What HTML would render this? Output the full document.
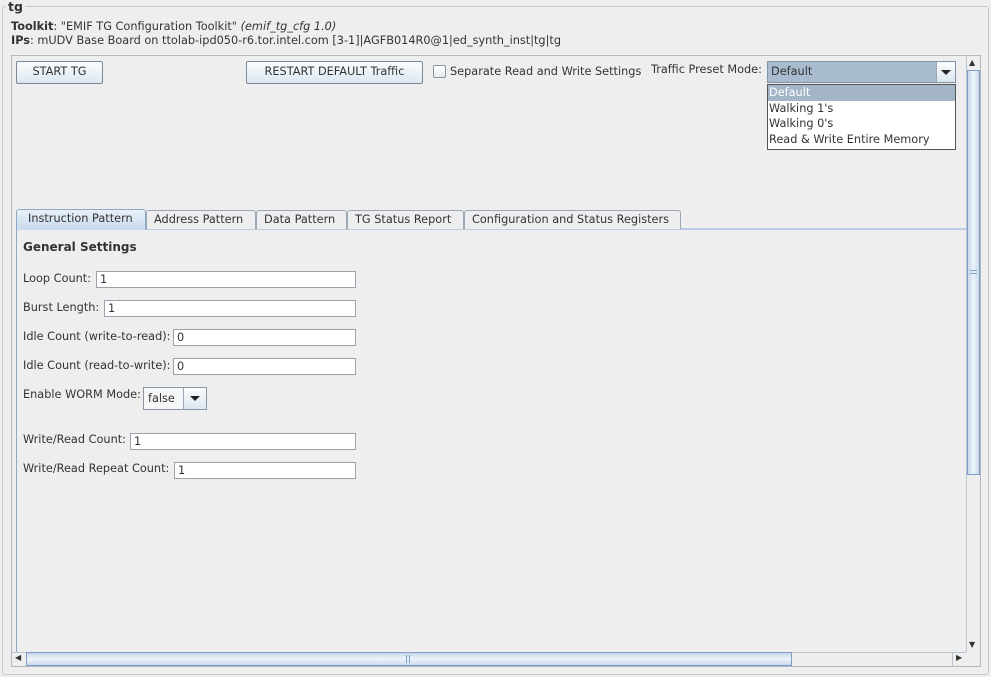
<!DOCTYPE html>
<html><head><meta charset="utf-8"><style>
*{box-sizing:border-box;margin:0;padding:0}
body{width:991px;height:677px;background:#eeeeee;font-family:"DejaVu Sans","Liberation Sans",sans-serif;font-size:11.3px;color:#333;position:relative;overflow:hidden}
.a{position:absolute;white-space:nowrap}
.btn{position:absolute;border:1px solid #7a8a99;border-radius:2px;background:linear-gradient(#fbfcfd,#dce6f0);text-align:center;line-height:20px;color:#333}
.tf{position:absolute;height:17px;background:#fff;border:1px solid #9aa3ad;line-height:15px;padding-left:3px}
.tab{position:absolute;top:210px;height:19px;border:1px solid #9aa8b8;border-bottom:none;border-radius:3px 3px 0 0;line-height:17px;padding:0 7px;background:#eeeeee}
</style></head><body>
<div class="a" style="left:2px;top:6px;width:987px;height:669px;border:1px solid #c8c8c8;border-radius:3px"></div>
<div class="a" style="left:6px;top:-1px;background:#eee;padding:0 2px;font-weight:bold;font-size:12.5px">tg</div>
<div class="a" style="left:11px;top:20px"><b>Toolkit</b>: "EMIF TG Configuration Toolkit" <i>(emif_tg_cfg 1.0)</i></div>
<div class="a" style="left:11px;top:34px"><b>IPs</b>: mUDV Base Board on ttolab-ipd050-r6.tor.intel.com [3-1]|AGFB014R0@1|ed_synth_inst|tg|tg</div>
<div class="a" style="left:11px;top:55px;width:970px;height:612px;border:1px solid #b0b8c4"></div>
<div class="btn" style="left:16px;top:61px;width:87px;height:23px">START TG</div>
<div class="btn" style="left:246px;top:61px;width:177px;height:23px">RESTART DEFAULT Traffic</div>
<div class="a" style="left:433px;top:65px;width:13px;height:13px;border:1px solid #8a96a3;background:linear-gradient(#fff,#e4eaf0);border-radius:2px"></div>
<div class="a" style="left:450px;top:65px">Separate Read and Write Settings</div>
<div class="a" style="left:651px;top:63px">Traffic Preset Mode:</div>
<div class="a" style="left:767px;top:61px;width:189px;height:22px;background:#a9bccf;border:1px solid #7f93a8;line-height:20px;padding-left:3px">Default</div>
<div class="a" style="left:936px;top:62px;width:19px;height:20px;background:linear-gradient(#fbfcfd,#dce6f0);border-left:1px solid #9aa8b8"><div style="margin:8px 0 0 4px;width:0;height:0;border-left:5px solid transparent;border-right:5px solid transparent;border-top:5px solid #222"></div></div>
<div class="a" style="left:767px;top:84px;width:189px;height:66px;background:#fff;border:1px solid #555"></div>
<div class="a" style="left:768px;top:85px;width:187px;height:16px;background:#a3b5c7;color:#fff;padding-left:1px;line-height:16px">Default</div>
<div class="a" style="left:769px;top:102px">Walking 1's</div>
<div class="a" style="left:769px;top:117px">Walking 0's</div>
<div class="a" style="left:769px;top:133px">Read &amp; Write Entire Memory</div>
<div class="a" style="left:16px;top:228px;width:950px;height:424px;border-left:1px solid #90a8c8;border-top:2px solid #b8cde4"></div>
<div class="tab" style="left:146px;width:110px">Address Pattern</div>
<div class="tab" style="left:256px;width:91px">Data Pattern</div>
<div class="tab" style="left:347px;width:117px">TG Status Report</div>
<div class="tab" style="left:464px;width:217px">Configuration and Status Registers</div>
<div class="tab" style="left:16px;top:209px;height:21px;width:130px;background:linear-gradient(#e8f0f8,#c8daee);border-color:#90a8c8;padding-left:11px;padding-right:4px">Instruction Pattern</div>
<div class="a" style="left:23px;top:240px;font-weight:bold;font-size:12px">General Settings</div>
<div class="a" style="left:23px;top:272px">Loop Count:</div><div class="tf" style="left:96px;top:271px;width:260px">1</div>
<div class="a" style="left:23px;top:301px">Burst Length:</div><div class="tf" style="left:104px;top:300px;width:252px">1</div>
<div class="a" style="left:23px;top:330px">Idle Count (write-to-read):</div><div class="tf" style="left:173px;top:329px;width:183px">0</div>
<div class="a" style="left:23px;top:359px">Idle Count (read-to-write):</div><div class="tf" style="left:173px;top:358px;width:183px">0</div>
<div class="a" style="left:23px;top:388px">Enable WORM Mode:</div>
<div class="a" style="left:143px;top:387px;width:64px;height:23px;border:1px solid #8a96a3;background:#f4f6f8;line-height:21px;padding-left:4px">false</div>
<div class="a" style="left:183px;top:388px;width:23px;height:21px;background:linear-gradient(#fbfcfd,#dce6f0);border-left:1px solid #9aa8b8"><div style="margin:8px 0 0 6px;width:0;height:0;border-left:5px solid transparent;border-right:5px solid transparent;border-top:5px solid #222"></div></div>
<div class="a" style="left:23px;top:433px">Write/Read Count:</div><div class="tf" style="left:130px;top:433px;width:226px">1</div>
<div class="a" style="left:23px;top:462px">Write/Read Repeat Count:</div><div class="tf" style="left:174px;top:462px;width:182px">1</div>
<div class="a" style="left:966px;top:56px;width:14px;height:596px;background:#eee;border-left:1px solid #b8c4d0"></div>
<div class="a" style="top:58px;font-size:8px;left:969px">▲</div>
<div class="a" style="left:967px;top:70px;width:13px;height:405px;border:1px solid #7f9cc8;background:linear-gradient(90deg,#c8d8ea,#eef4fa 50%,#c8d8ea)"></div>
<div class="a" style="left:970px;top:270px;width:7px;height:4px;border-top:1px solid #7f9cc8;border-bottom:1px solid #7f9cc8"></div>
<div class="a" style="left:969px;top:640px;font-size:8px">▼</div>
<div class="a" style="left:12px;top:652px;width:954px;height:14px;background:#eee;border-top:1px solid #b8c4d0"></div>
<div class="a" style="left:15px;top:653px;font-size:8px">◀</div>
<div class="a" style="left:26px;top:652px;width:766px;height:14px;border:1px solid #7f9cc8;background:linear-gradient(#c8d8ea,#eef4fa 50%,#c8d8ea)"></div>
<div class="a" style="left:406px;top:655px;width:4px;height:8px;border-left:1px solid #7f9cc8;border-right:1px solid #7f9cc8"></div>
<div class="a" style="left:952px;top:652px;width:14px;height:14px;border-left:1px solid #b8c4d0"></div>
<div class="a" style="left:956px;top:653px;font-size:8px">▶</div>
</body></html>
